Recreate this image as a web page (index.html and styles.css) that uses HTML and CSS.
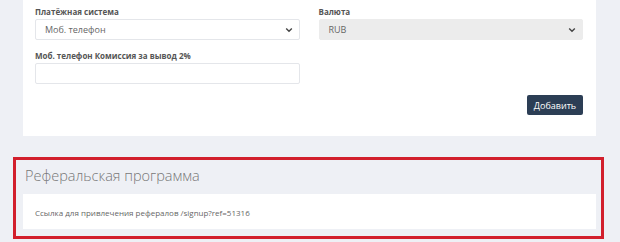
FILE: index.html
```html
<!DOCTYPE html>
<html lang="ru">
<head>
  <meta charset="UTF-8">
  <meta name="viewport" content="width=device-width, initial-scale=1.0">
  <title>Вывод средств</title>
  <link rel="stylesheet" href="styles.css">
</head>
<body>

  <div class="card">
    <div class="form-row">
      <div class="field">
        <label>Платёжная система</label>
        <div class="select">
          <span>Моб. телефон</span>
          <svg width="8" height="6" viewBox="0 0 8 6"><path d="M1.2 1.5 L4 4.3 L6.8 1.5" fill="none" stroke="#444" stroke-width="1.4"/></svg>
        </div>
      </div>
      <div class="field">
        <label>Валюта</label>
        <div class="select disabled">
          <span>RUB</span>
          <svg width="8" height="6" viewBox="0 0 8 6"><path d="M1.2 1.5 L4 4.3 L6.8 1.5" fill="none" stroke="#444" stroke-width="1.4"/></svg>
        </div>
      </div>
    </div>
    <div class="form-row">
      <div class="field">
        <label>Моб. телефон Комиссия за вывод 2%</label>
        <div class="input"></div>
      </div>
      <div class="field"></div>
    </div>
    <div class="actions">
      <button class="btn">Добавить</button>
    </div>
  </div>

  <div class="highlight">
    <div class="referral">
      <div class="referral-head">Реферальская программа</div>
      <div class="referral-body">Ссылка для привлечения рефералов /signup?ref=51316</div>
    </div>
  </div>

</body>
</html>
```
FILE: styles.css
```css
body{
  margin: 0;
  background-color: #eef0f5;
  font-family: 'Open Sans', 'Noto Sans', sans-serif;
  color: #444;
}
.card{
  background-color: #ffffff;
  margin: 0 24px 0 23px;
  padding: 7px 13px 21px 12px;
}
.form-row{
  display: flex;
  gap: 19px;
  margin-bottom: 11px;
}
.field{
  flex: 1;
}
.field label{
  display: block;
  font-size: 8px;
  font-weight: 700;
  color: #555;
  line-height: 10px;
  margin-bottom: 2px;
}
.select{
  display: flex;
  align-items: center;
  justify-content: space-between;
  height: 19px;
  border: 1px solid #e4e6ea;
  border-radius: 2px;
  padding: 0 6px 0 9px;
  font-size: 9px;
  color: #666;
}
.select.disabled{
  background-color: #ececec;
  border-color: #ececec;
}
.input{
  height: 19px;
  border: 1px solid #e4e6ea;
  border-radius: 2px;
}
.actions{
  display: flex;
  justify-content: flex-end;
}
.btn{
  background-color: #2c3e55;
  color: #ffffff;
  border: none;
  border-radius: 2px;
  font-family: 'Open Sans', sans-serif;
  font-size: 9px;
  height: 20px;
  width: 56px;
  padding: 0;
}
.highlight{
  margin: 21px 16px 0 13px;
  border: 3px solid #d21f2c;
  padding: 0 5px 7px 7px;
}
.referral-head{
  font-size: 14.5px;
  font-weight: 300;
  color: #777;
  padding: 5px 2px 8px;
  line-height: 21px;
}
.referral-body{
  background-color: #ffffff;
  height: 35px;
  line-height: 37px;
  padding: 0 12px;
  font-size: 8px;
  color: #666;
}
```
